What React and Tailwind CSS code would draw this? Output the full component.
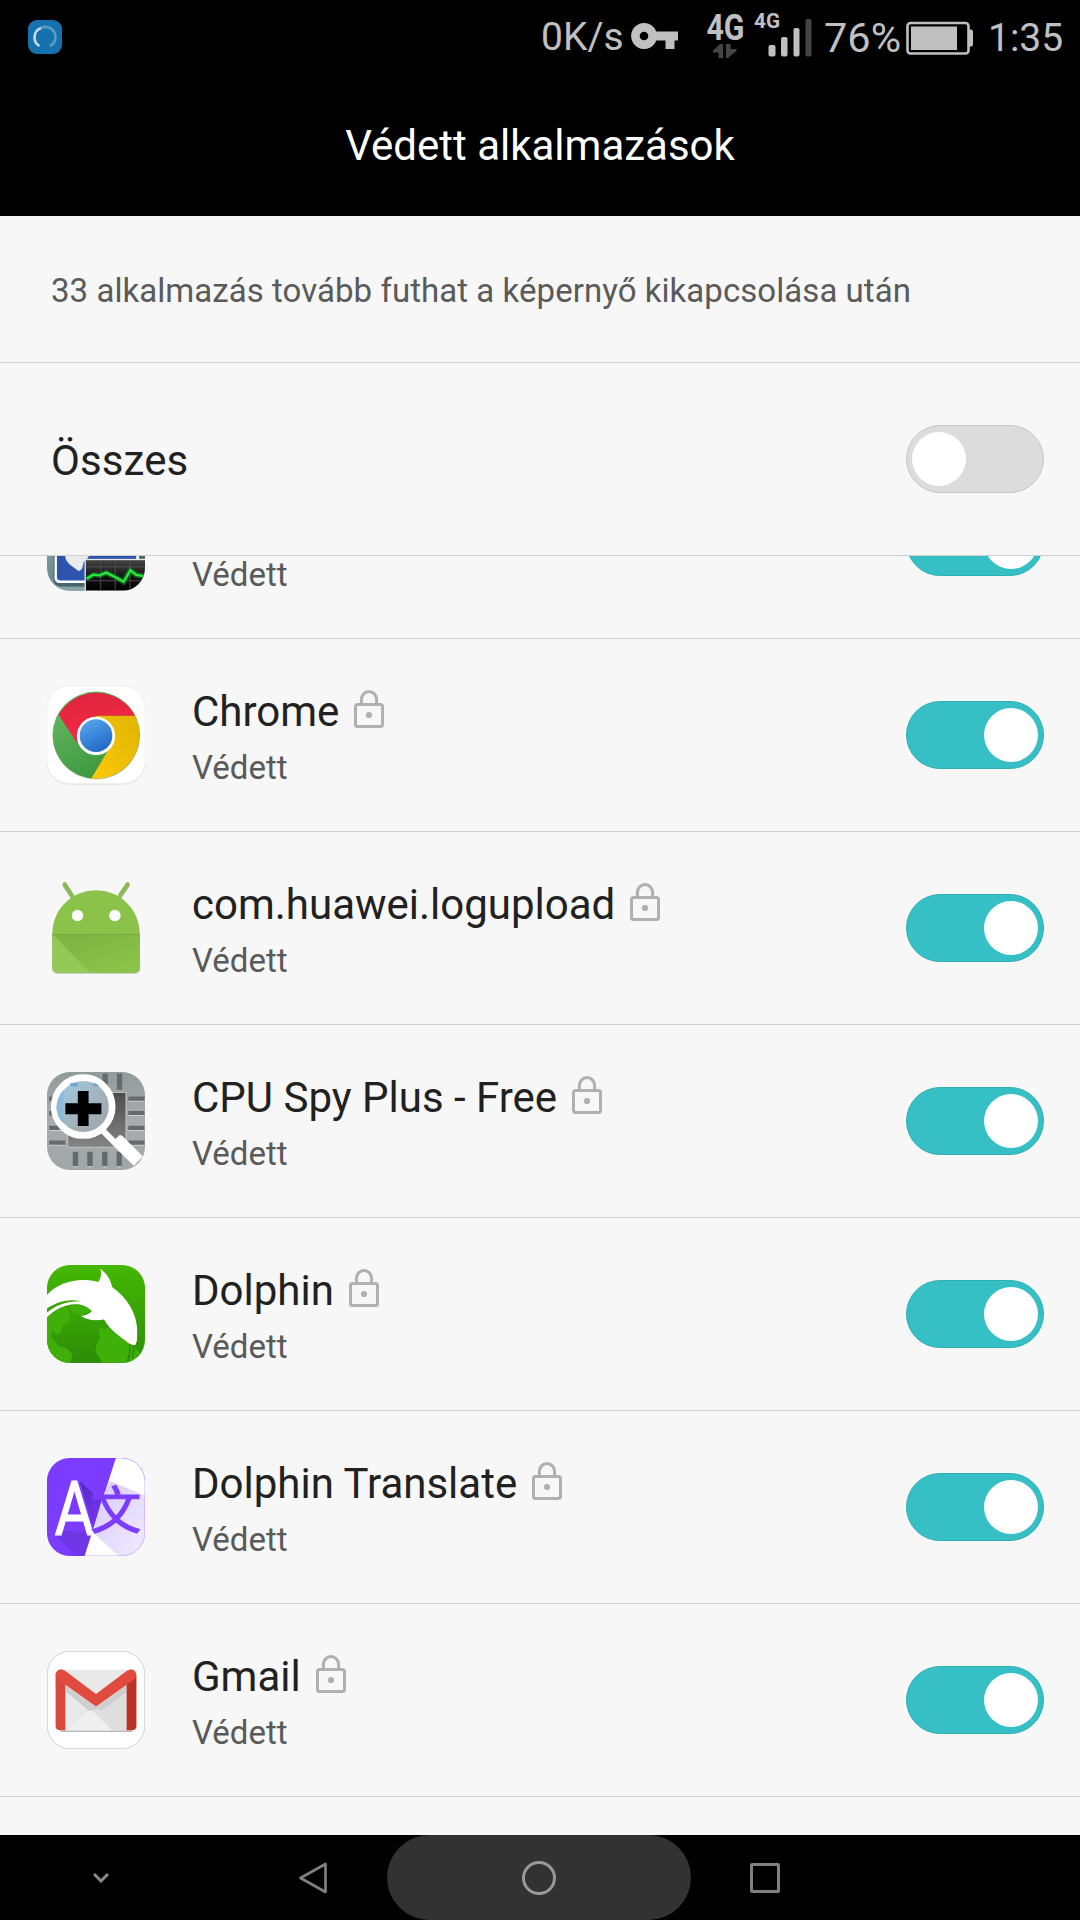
function MonitorIcon() {
    return (
        <svg viewBox="142.5 -139.5 291 291" className="size-[98px]">
            <defs>
                <linearGradient id="monBg" x1="0" y1="0" x2="0" y2="1">
                    <stop offset="0" stopColor="#9fb9bd" />
                    <stop offset="0.86" stopColor="#6b8c92" />
                    <stop offset="1" stopColor="#8fa9ae" />
                </linearGradient>
                <linearGradient id="monGraph" x1="0" y1="0" x2="0" y2="1">
                    <stop offset="0" stopColor="#424242" />
                    <stop offset="0.6" stopColor="#111" />
                    <stop offset="1" stopColor="#000" />
                </linearGradient>
                <clipPath id="monClip">
                    <rect x="142.5" y="-139.5" width="291" height="291" rx="68" />
                </clipPath>
            </defs>
            <g clipPath="url(#monClip)">
                <rect x="142" y="-140" width="292" height="292" fill="url(#monBg)" />
                <path d="M162 90V-90H436V90H260V138H180Q162 136 162 114Z" fill="#46646c" />
                <rect x="165" y="-110" width="250" height="238" rx="14" fill="#fff" />
                <rect x="172" y="-104" width="236" height="224" rx="10" fill="#2d55ad" />
                <path d="M196 46H268Q262 58 252 64L247 84Q240 96 233 90L212 74Q198 64 196 46Z" fill="#e9ebec" />
                <path d="M408 46h8v10h-8z" fill="#fff" />
                <rect x="254" y="56" width="182" height="98" fill="#e4e9e6" />
                <rect x="258" y="60" width="178" height="90" fill="url(#monGraph)" />
                <path d="M258 80H436M258 121H436M302 60V150M345 60V150M389 60V150" stroke="#555" strokeWidth="2.5" />
                <path d="M260 115L280 103L300 105L318 97L345 110L370 124L390 90L408 104L434 108" fill="none" stroke="#138a25" strokeWidth="16" opacity="0.6" />
                <path d="M260 115L280 103L300 105L318 97L345 110L370 124L390 90L408 104L434 108" fill="none" stroke="#29e83c" strokeWidth="7" />
            </g>
        </svg>
    );
}

function ChromeIcon() {
    return (
        <svg viewBox="142.5 439.5 291 291" className="size-[98px] overflow-visible">
            <defs>
                <linearGradient id="chRed" x1="0" y1="0" x2="0.3" y2="1">
                    <stop offset="0" stopColor="#d9263c" />
                    <stop offset="1" stopColor="#fb2746" />
                </linearGradient>
                <linearGradient id="chGreen" x1="0" y1="0" x2="0.6" y2="1">
                    <stop offset="0" stopColor="#6cbc66" />
                    <stop offset="1" stopColor="#3a963d" />
                </linearGradient>
                <linearGradient id="chYellow" x1="1" y1="0" x2="0" y2="1">
                    <stop offset="0" stopColor="#e2b400" />
                    <stop offset="1" stopColor="#fbc90a" />
                </linearGradient>
                <linearGradient id="chBlue" x1="0.2" y1="0" x2="0.7" y2="1">
                    <stop offset="0" stopColor="#56a5ef" />
                    <stop offset="1" stopColor="#1f68c4" />
                </linearGradient>
            </defs>
            <rect x="142.5" y="441" width="291" height="291" rx="66" fill="#d8d8d8" />
            <rect x="142.5" y="439.5" width="291" height="290" rx="66" fill="#fff" stroke="#ececec" strokeWidth="2" />
            <circle cx="289" cy="588" r="130" fill="#ddd" />
            <circle cx="288.5" cy="585.5" r="129.5" fill="url(#chGreen)" />
            <path d="M288 528H404A129.5 129.5 0 0 1 274 714L333 615Z" fill="url(#chYellow)" />
            <path d="M177 525A129.5 129.5 0 0 1 404 528H289L233 610Z" fill="url(#chRed)" />
            <circle cx="288" cy="588" r="57" fill="#fff" />
            <circle cx="288" cy="587" r="48.5" fill="url(#chBlue)" />
        </svg>
    );
}

function AndroidIcon() {
    return (
        <svg viewBox="52.5 58.5 291 291" className="size-[98px]">
            <defs>
                <linearGradient id="anShade" x1="0" y1="0" x2="0.7" y2="1">
                    <stop offset="0" stopColor="#7cb140" />
                    <stop offset="1" stopColor="#8bc34a" />
                </linearGradient>
            </defs>
            <path d="M68 323Q68 340 84 340H313Q329 340 329 323V300H68Z" fill="#b9c4ac" />
            <path d="M105 77L126 109M292 77L270 109" stroke="#a8b79a" strokeWidth="13" strokeLinecap="round" />
            <path d="M105 74L126 106M292 74L270 106" stroke="#8bbb50" strokeWidth="12" strokeLinecap="round" />
            <path d="M68 221A130 129 0 0 1 328 221V320Q328 336 313 336H84Q68 336 68 320Z" fill="#8bc34a" />
            <path d="M68 222H328V320Q328 336 313 336H84Q68 336 68 320Z" fill="#92c957" />
            <path d="M70 223H328V320Q328 336 313 336H180Z" fill="url(#anShade)" />
            <path d="M68 223H328" stroke="#78a942" strokeWidth="3" />
            <circle cx="143" cy="167" r="17" fill="#fafafa" />
            <circle cx="254" cy="167" r="17" fill="#fafafa" />
        </svg>
    );
}

function CpuSpyIcon() {
    return (
        <svg viewBox="52.5 52.5 291 291" className="size-[98px]">
            <defs>
                <linearGradient id="cpuBg" x1="0" y1="0" x2="0" y2="1">
                    <stop offset="0" stopColor="#919b9c" />
                    <stop offset="0.5" stopColor="#a8acae" />
                    <stop offset="1" stopColor="#a0a6a9" />
                </linearGradient>
                <linearGradient id="cpuChip" x1="0" y1="0" x2="0" y2="1">
                    <stop offset="0" stopColor="#4c4c4c" />
                    <stop offset="1" stopColor="#858585" />
                </linearGradient>
                <linearGradient id="cpuLens" x1="0" y1="0" x2="1" y2="1">
                    <stop offset="0" stopColor="#9fd0ee" />
                    <stop offset="0.6" stopColor="#a2b0b9" />
                    <stop offset="1" stopColor="#9da2a6" />
                </linearGradient>
                <clipPath id="cpuClip">
                    <rect x="52.5" y="52.5" width="291" height="291" rx="68" />
                </clipPath>
            </defs>
            <g clipPath="url(#cpuClip)">
                <rect x="52" y="52" width="292" height="292" fill="url(#cpuBg)" />
                <g fill="#666a6c">
                    <path d="M217 58h16v47h-16zM260 58h16v47h-16z" />
                    <path d="M129 289h16v45h-16zM172 289h16v45h-16zM216 289h16v45h-16zM259 289h16v45h-16z" />
                    <path d="M294 125h48v14h-48zM294 168h48v14h-48zM294 212h48v14h-48zM294 256h48v14h-48z" />
                    <path d="M59 125h48v14H59zM59 168h48v14H59zM59 212h48v14H59zM59 256h48v14H59z" />
                </g>
                <path d="M129 334h16M172 334h16M216 334h16M259 334h16M294 139h48M294 182h48M294 226h48M294 270h48M59 270h48M59 226h48" stroke="#cdd1d3" strokeWidth="3" />
                <rect x="114" y="113" width="173" height="163" fill="url(#cpuChip)" stroke="#c1c5c6" strokeWidth="3" />
                <circle cx="160" cy="155" r="86" fill="url(#cpuLens)" stroke="#fff" strokeWidth="20" />
                <path d="M122 95V85h22v10zM190 85v10h18q-8-10-18-10z" fill="#71a4c7" />
                <path d="M102 105V206Q84 193 80 158Q82 126 102 105Z" fill="#8dbbdc" />
                <path d="M144 109h32v36h38v33h-38v35h-32v-35h-37v-33h37z" fill="#000" />
                <path d="M217 225L254 263" stroke="#fff" strokeWidth="18" />
                <path d="M262 256L324 317" stroke="#fff" strokeWidth="39" />
                <path d="M252 263L270 246" stroke="#fff" strokeWidth="12" strokeLinecap="round" />
            </g>
        </svg>
    );
}

function DolphinIcon() {
    return (
        <svg viewBox="52.5 46.5 291 291" className="size-[98px]">
            <defs>
                <linearGradient id="doBg" x1="0" y1="0" x2="0" y2="1">
                    <stop offset="0" stopColor="#43b803" />
                    <stop offset="1" stopColor="#2e8d08" />
                </linearGradient>
                <clipPath id="doClip">
                    <rect x="52.5" y="46.5" width="291" height="291" rx="68" />
                </clipPath>
            </defs>
            <g clipPath="url(#doClip)">
                <rect x="52" y="46" width="292" height="292" fill="url(#doBg)" />
                <path d="M52 205Q80 178 112 172L122 202L118 216L98 228L93 248L82 254L68 240L64 258L76 274L92 290L112 294L128 312L122 338H52Z" fill="#3faf0a" />
                <path d="M120 168Q150 160 186 182L152 198L142 190L130 192Z" fill="#3faf0a" />
                <path d="M207 232L222 238L232 232L262 254L312 288Q318 300 330 308L300 338H214L208 318L196 304L200 282L210 264Z" fill="#3faf0a" />
                <path d="M296 282h5q2 28-6 52h-7q10-26 8-52zM307 284h5q2 20-3 40h-6q6-20 4-40z" fill="#2c8c08" />
                <path d="M52 136C86 96 150 82 205 97Q217 82 211 58Q239 78 246 112C296 148 324 200 320 252Q321 280 313 285Q298 284 284 270C262 252 240 240 222 208C198 212 176 212 153 198Q174 196 186 183C168 166 150 160 124 164C96 168 72 184 52 202V188C76 168 106 154 152 154C116 146 78 158 52 176Z" fill="#fff" />
            </g>
        </svg>
    );
}

function TranslateIcon() {
    return (
        <svg viewBox="52.5 55.5 291 291" className="size-[98px]">
            <defs>
                <clipPath id="trClip">
                    <rect x="52.5" y="55.5" width="291" height="291" rx="68" />
                </clipPath>
                <linearGradient id="trShadow" x1="0" y1="0" x2="1" y2="1">
                    <stop offset="0" stopColor="#d8c9fb" />
                    <stop offset="1" stopColor="#f1ebff" />
                </linearGradient>
                <linearGradient id="trDark" x1="0" y1="0" x2="1" y2="1">
                    <stop offset="0" stopColor="#5424bd" />
                    <stop offset="1" stopColor="#7c3cff" />
                </linearGradient>
            </defs>
            <g clipPath="url(#trClip)">
                <rect x="52" y="55" width="292" height="292" fill="#7c3cff" />
                <path d="M76 284L140 347H164L186 278L100 270Z" fill="#6e36e4" />
                <path d="M150 124L222 190L192 270Z" fill="url(#trDark)" />
                <path d="M257 55H344V347H164Z" fill="#fff" />
                <path d="M240 124L326 160L344 166V347H266L188 276L218 170Z" fill="url(#trShadow)" />
                <text x="75" y="283" textLength="118" lengthAdjust="spacingAndGlyphs" fontFamily="Roboto, sans-serif" fontWeight="400" fontSize="223" fill="#fff" stroke="#fff" strokeWidth="3">A</text>
                <text x="182" y="266" fontFamily="'Noto Sans CJK SC', sans-serif" fontWeight="400" fontSize="151" fill="#7c3cff" stroke="#7c3cff" strokeWidth="3">文</text>
            </g>
            <rect x="53.5" y="56.5" width="289" height="289" rx="67" fill="none" stroke="#7c3cff" strokeOpacity="0.35" strokeWidth="2" />
        </svg>
    );
}

function GmailIcon() {
    return (
        <svg viewBox="52.5 49.5 291 291" className="size-[98px]">
            <rect x="53.5" y="50.5" width="289" height="289" rx="67" fill="#fff" stroke="#cacaca" strokeWidth="2.5" />
            <path d="M92 285H306V290H92Z" fill="#b9b9b9" />
            <rect x="96" y="105" width="206" height="180" fill="#e9e9e9" />
            <path d="M108 285L180 222L198 214L290 150V285Z" fill="#dedede" />
            <path d="M108 285L182 222L248 285Z" fill="#efefef" />
            <path d="M108 152L198 216L290 150V170L216 226L198 222L178 228L108 170Z" fill="#cfcfcf" />
            <path d="M78 122Q78 112 90 108L107 146V285H92Q78 285 78 272Z" fill="#d9483d" />
            <path d="M318 122L289 146V285H304Q318 285 318 272Z" fill="#bb3125" />
            <path d="M78 121Q79 106 95 104L106 108L198 177L290 108L301 104Q317 106 318 121Q318 129 311 134L198 214L85 134Q78 129 78 121Z" fill="#e04a3f" />
        </svg>
    );
}

// the first row is scrolled so far that its name is out of view
const apps = [
    { name: "", Icon: MonitorIcon },
    { name: "Chrome", Icon: ChromeIcon },
    { name: "com.huawei.logupload", Icon: AndroidIcon },
    { name: "CPU Spy Plus - Free", Icon: CpuSpyIcon },
    { name: "Dolphin", Icon: DolphinIcon },
    { name: "Dolphin Translate", Icon: TranslateIcon },
    { name: "Gmail", Icon: GmailIcon },
];

function LockIcon() {
    return (
        <svg viewBox="0 0 30 38" className="mb-[7px] h-[38px] w-[30px]" fill="none" stroke="#b0b0b0" strokeWidth="3">
            <rect x="1.5" y="14.5" width="27" height="22" rx="2" />
            <path d="M7.4 14V9.5a7.6 8 0 0 1 15.2 0V14" />
            <circle cx="15" cy="25" r="3.1" fill="#b0b0b0" stroke="none" />
        </svg>
    );
}

function Toggle({ on }) {
    return (
        <div
            className={
                on
                    ? "flex h-[68px] w-[138px] items-center justify-end rounded-full border border-[#2fb0b4] bg-[#36bfc5] px-[5px]"
                    : "flex h-[68px] w-[138px] items-center rounded-full border border-[#c6c6c6] bg-[#dcdcdc] px-[5px]"
            }
        >
            <div className="size-[54px] rounded-full bg-white" />
        </div>
    );
}

function AppRow({ name, Icon }) {
    return (
        <div className="flex h-[193px] shrink-0 items-center border-b border-[#cfcfcf] pr-9 pl-[47px]">
            <Icon />
            <div className="ml-[47px] flex-1 pt-[10px]">
                <div className="flex h-14 items-center gap-[15px]">
                    <span className="text-[42px] leading-[56px] text-[#212121]">{name}</span>
                    <LockIcon />
                </div>
                <div className="text-[33px] leading-[56px] text-[#5a5a5a]">Védett</div>
            </div>
            <Toggle on />
        </div>
    );
}

function StatusBar() {
    return (
        <div className="flex h-[74px] items-center leading-none whitespace-nowrap text-[#c0c0c0]">
            <svg viewBox="0 0 34 34" className="ml-[27.5px] size-[34px]" fill="none" strokeWidth="2.6">
                <rect width="34" height="34" rx="9" fill="#1572ae" />
                <path d="M11.5 26A10 10 0 0 1 13 8" stroke="#c4d8e5" />
                <path d="M13 8A10 10 0 0 1 22 26" stroke="#5a9cc2" />
            </svg>
            <span className="ml-[479.5px] w-[90px] pt-px text-[39px]">0K/s</span>
            <svg viewBox="0 0 47 27" className="mb-0.5 h-[27px] w-[47px]" fill="#c0c0c0">
                <path fillRule="evenodd" d="M13 0a13 13 0 0 1 12.3 8.5H47V17.5H43.5V26H34.5V17.5H25.3A13 13 0 1 1 13 0ZM13 8.7a4.3 4.3 0 1 0 0 8.6a4.3 4.3 0 1 0 0-8.6Z" />
            </svg>
            <svg viewBox="0 -12 112 72" className="mb-[5px] ml-7 h-[72px] w-28" fill="#c0c0c0">
                <text x="0.5" y="28.5" fontSize="37" fontWeight="700" textLength="38" lengthAdjust="spacingAndGlyphs">4G</text>
                <path d="M17 33V47H12.5V41.5H7V39.5L14 33ZM20 33V47H22L30.5 40V38H24.5V33Z" fill="#444" />
                <text x="48" y="17" fontSize="20.5" fontWeight="700" textLength="26" lengthAdjust="spacingAndGlyphs">4G</text>
                <rect x="62.5" y="34" width="7" height="11.5" rx="2" />
                <rect x="75" y="26" width="6.5" height="19.5" rx="2" />
                <rect x="87.5" y="17" width="6" height="28.5" rx="2" />
                <rect x="99.5" y="8" width="6" height="37.5" rx="2" fill="#444" />
            </svg>
            <span className="ml-[6px] w-[82px] pt-0.5 text-[41.5px]">76%</span>
            <svg viewBox="0 0 68 34" className="mt-0.5 h-[34px] w-[68px]">
                <rect x="1.5" y="2" width="61" height="30.5" rx="3" fill="none" stroke="#c0c0c0" strokeWidth="2.6" />
                <rect x="5" y="5.5" width="46" height="23.5" fill="#c0c0c0" />
                <path d="M63 8.5h2q2 0 2 2v13q0 2-2 2h-2z" fill="#c0c0c0" />
            </svg>
            <span className="ml-[14px] pt-0.5 text-[39px]">1:35</span>
        </div>
    );
}

function NavBar() {
    return (
        <div className="flex h-[85px] items-center bg-black">
            <svg viewBox="0 0 16 10" className="ml-[93px] h-[10px] w-4" fill="none" stroke="#8a8a8a" strokeWidth="3">
                <path d="M1 1L8 8L15 1" />
            </svg>
            <svg viewBox="0 0 30 34" className="ml-[189px] h-[34px] w-[30px]" fill="none" stroke="#808080" strokeWidth="2.7" strokeLinejoin="round">
                <path d="M27.5 3V31L2.5 17Z" />
            </svg>
            <div className="ml-[59px] flex h-[85px] w-[304px] items-center justify-center rounded-full bg-[#323232]">
                <div className="size-[34px] rounded-full border-3 border-[#999]" />
            </div>
            <div className="ml-[59px] size-[30px] rounded-[2px] border-3 border-[#808080]" />
        </div>
    );
}

export default function App() {
    return (
        <div className="flex h-[1920px] w-[1080px] flex-col overflow-hidden bg-[#f7f7f7] font-[Roboto,sans-serif]">
            <header className="h-[216px] bg-black">
                <StatusBar />
                <h1 className="text-center text-[42px] leading-[144px] text-white">Védett alkalmazások</h1>
            </header>

            <p className="h-[147px] border-b border-[#cfcfcf] pl-[51px] text-[33px] leading-[150px] tracking-[0.05px] text-[#5a5a5a]">
                33 alkalmazás tovább futhat a képernyő kikapcsolása után
            </p>

            <div className="flex h-[193px] items-center justify-between border-b border-[#cfcfcf] pr-9 pl-[51px]">
                <span className="pt-0.5 text-[42px] tracking-[0.1px] text-[#212121]">Összes</span>
                <Toggle on={false} />
            </div>

            <div className="flex flex-1 flex-col overflow-hidden">
                <div className="-mt-[110px]">
                    {apps.map((app, i) => (
                        <AppRow key={i} name={app.name} Icon={app.Icon} />
                    ))}
                </div>
            </div>

            <NavBar />
        </div>
    );
}
